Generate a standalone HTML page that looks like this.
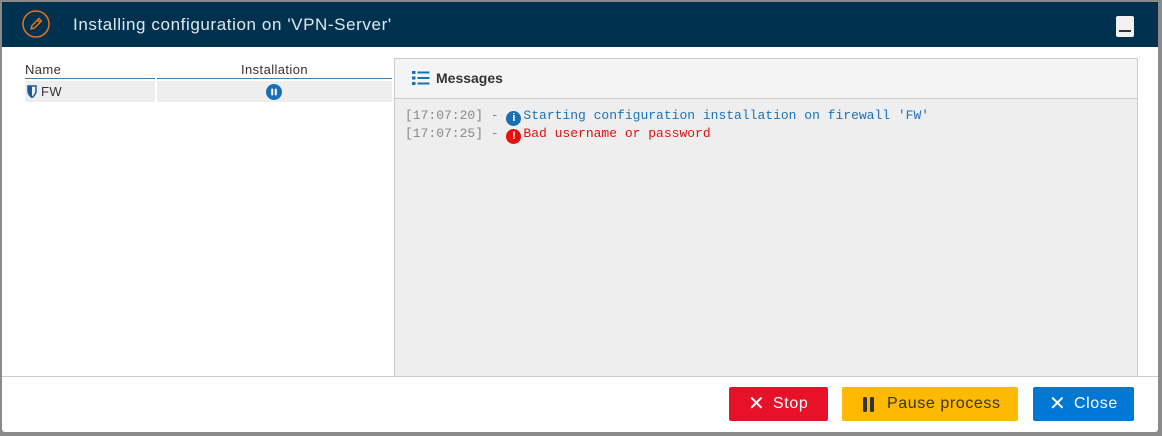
<!DOCTYPE html>
<html><head><style>
body{margin:0;width:1162px;height:436px;background:#8a8a8a;position:relative;overflow:hidden;font-family:"Liberation Sans",sans-serif}
.dlg{position:absolute;left:2px;top:2px;width:1156px;height:430px;background:#fff;border-radius:0 0 3px 3px;overflow:hidden}
.hdr{position:absolute;left:0;top:0;width:100%;height:45px;background:#003250}
.title{position:absolute;left:71px;top:13px;color:#dfe8ee;font-size:17px;letter-spacing:0.6px}
.min{position:absolute;left:1114px;top:14px;width:18px;height:21px;background:#f2f2f2;border-radius:2px}
.min:after{content:"";position:absolute;left:3px;top:14px;width:12px;height:2px;background:#333}
.th{position:absolute;top:60px;font-size:13px;color:#333;border-bottom:1px solid #3a80b8;height:16px;letter-spacing:0.4px}
.td{position:absolute;top:79px;height:21px;background:#eee;font-size:13px;color:#333;letter-spacing:0.4px}
.msgs{position:absolute;left:392px;top:56px;width:742px;height:318px;background:#eee;border:1px solid #ccc;border-bottom:none}
.mh{height:39px;background:#f4f4f4;border-bottom:1px solid #ccc;font-weight:bold;font-size:14px;color:#333;line-height:38px;padding-left:41px;position:relative}
.ln{font-family:"Liberation Mono",monospace;font-size:13px;position:absolute;left:10px;white-space:pre}
.ic{display:inline-block;width:15px;height:15px;border-radius:50%;color:#fff;font:bold 11px "Liberation Sans",sans-serif;text-align:center;line-height:15px;vertical-align:-2px;margin-right:2px}
.foot{position:absolute;left:0;top:374px;width:100%;border-top:1px solid #ccc}
.btn{position:absolute;top:385px;height:34px;border-radius:2px;font-size:16px;line-height:34px;color:#fff;letter-spacing:0.6px}
</style></head><body>
<div class="dlg">
<div class="hdr">
<svg style="position:absolute;left:19px;top:7px" width="30" height="30" viewBox="0 0 30 30"><circle cx="15" cy="15" r="13" fill="none" stroke="#e0701c" stroke-width="1.6"/><path d="M10 20 L11 16.5 L18 9.5 L20.5 12 L13.5 19 Z M16.5 11 L19 13.5" fill="none" stroke="#e0701c" stroke-width="1.5" stroke-linejoin="round"/></svg>
<div class="title">Installing configuration on 'VPN-Server'</div>
<div class="min"></div>
</div>
<div class="th" style="left:23px;width:130px">Name</div>
<div class="th" style="left:155px;width:235px;text-align:center">Installation</div>
<div class="td" style="left:23px;width:130px;line-height:21px"><svg style="vertical-align:-2px;margin-left:2px" width="10" height="13" viewBox="0 0 10 13"><path d="M1 1h8v5c0 3-2 5-4 6.5C3 11 1 9 1 6z" fill="none" stroke="#1a5a9a" stroke-width="1.5"/><path d="M1 1h4v11.5C3 11 1 9 1 6z" fill="#1a5a9a"/></svg> FW</div>
<div class="td" style="left:155px;width:235px"><svg style="position:absolute;left:109px;top:3px" width="16" height="16"><circle cx="8" cy="8" r="8" fill="#1a6fb0"/><rect x="5.2" y="4.5" width="2" height="7" rx="1" fill="#fff"/><rect x="8.8" y="4.5" width="2" height="7" rx="1" fill="#fff"/></svg></div>
<div class="msgs">
<div class="mh"><svg style="position:absolute;left:17px;top:11px" width="18" height="16"><g fill="#1a6fb0"><rect x="0" y="1" width="3.5" height="3"/><rect x="0" y="6.5" width="3.5" height="3"/><rect x="0" y="12" width="3.5" height="3"/><rect x="5.5" y="1.5" width="12" height="2"/><rect x="5.5" y="7" width="12" height="2"/><rect x="5.5" y="12.5" width="12" height="2"/></g></svg>Messages</div>
<div class="ln" style="top:49px"><span style="color:#888">[17:07:20] - </span><span class="ic" style="background:#1a6fb0">i</span><span style="color:#1a72b8">Starting configuration installation on firewall 'FW'</span></div>
<div class="ln" style="top:67px"><span style="color:#888">[17:07:25] - </span><span class="ic" style="background:#e8100e">!</span><span style="color:#e8100e">Bad username or password</span></div>
</div>
<div class="foot"></div>
<div class="btn" style="left:727px;width:99px;background:#e8112a"><span style="position:absolute;left:19px;font-size:20px">✕</span><span style="position:absolute;left:44px">Stop</span></div>
<div class="btn" style="left:840px;width:176px;background:#ffb900;color:#333"><svg style="position:absolute;left:21px;top:10px" width="12" height="15"><rect x="0" y="0" width="4" height="15" rx="1.5" fill="#333"/><rect x="7" y="0" width="4" height="15" rx="1.5" fill="#333"/></svg><span style="position:absolute;left:45px">Pause process</span></div>
<div class="btn" style="left:1031px;width:101px;background:#0078d4"><span style="position:absolute;left:16px;font-size:20px">✕</span><span style="position:absolute;left:41px">Close</span></div>
</div>
</body></html>
